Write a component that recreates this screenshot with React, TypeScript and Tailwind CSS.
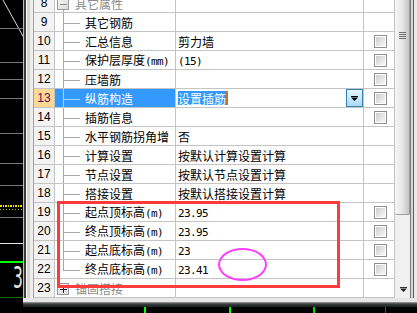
import React from "react";

type Row = {
  n: number;
  name: string;
  value?: string;
  cb?: boolean;
  sel?: boolean;
  group?: "minus" | "plus";
  last?: boolean;
};

const rows: Row[] = [
  { n: 8, name: "其它属性", group: "minus" },
  { n: 9, name: "其它钢筋" },
  { n: 10, name: "汇总信息", value: "剪力墙", cb: true },
  { n: 11, name: "保护层厚度(mm)", value: "(15)", cb: true },
  { n: 12, name: "压墙筋", cb: true },
  { n: 13, name: "纵筋构造", value: "设置插筋", cb: true, sel: true },
  { n: 14, name: "插筋信息", cb: true },
  { n: 15, name: "水平钢筋拐角增", value: "否" },
  { n: 16, name: "计算设置", value: "按默认计算设置计算" },
  { n: 17, name: "节点设置", value: "按默认节点设置计算" },
  { n: 18, name: "搭接设置", value: "按默认搭接设置计算" },
  { n: 19, name: "起点顶标高(m)", value: "23.95", cb: true },
  { n: 20, name: "终点顶标高(m)", value: "23.95", cb: true },
  { n: 21, name: "起点底标高(m)", value: "23", cb: true },
  { n: 22, name: "终点底标高(m)", value: "23.41", cb: true, last: true },
  { n: 23, name: "锚固搭接", group: "plus" },
];

// ascii runs drawn half-width like the bitmap song font
function Txt({ s }: { s: string }) {
  const parts = s.split(/([\x21-\x7e]+)/);
  return (
    <>
      {parts.map((p, i) =>
        i % 2 === 1 ? (
          <span key={i} className="font-['DejaVu_Sans_Mono',monospace] text-[11px] tracking-[-0.6px]">
            {p}
          </span>
        ) : (
          <span key={i}>{p}</span>
        )
      )}
    </>
  );
}

function Checkbox() {
  return (
    <div className="w-[13px] h-[13px] border border-[#8e8e8e] bg-white p-[1px] ml-[2px]">
      <div className="w-full h-full bg-linear-to-br from-[#cdcdcd] to-[#f8f8f8]" />
    </div>
  );
}

function ExpandBox({ plus }: { plus?: boolean }) {
  return (
    <div className="absolute left-[2px] top-[4px] w-[12px] h-[12px] border border-[#9a9a9a] bg-linear-to-br from-[#f4f4f4] to-[#dcdcdc] flex items-center justify-center">
      <div className={`relative w-[7px] h-px ${plus ? "bg-[#202020]" : "bg-[#8a8a8a]"}`}>
        {plus && <div className="absolute left-[3px] top-[-3px] w-px h-[7px] bg-[#202020]" />}
      </div>
    </div>
  );
}

function NameCell({ r }: { r: Row }) {
  const line = r.sel ? "bg-[#a8d2ff]" : "bg-[#a6a6a6]";
  return (
    <div
      className={`relative w-[121px] shrink-0 border-r border-[#c4c4c4] flex items-center overflow-hidden whitespace-nowrap ${
        r.sel ? "bg-[#3399ff] text-white" : r.group ? "text-[#8c8c8c]" : "text-black"
      } ${r.group ? "pl-[20px]" : "pl-[30px]"}`}
    >
      {r.group === "minus" && (
        <>
          <div className={`absolute left-[8px] top-[16px] bottom-0 w-px ${line}`} />
          <ExpandBox />
        </>
      )}
      {r.group === "plus" && <ExpandBox plus />}
      {!r.group && (
        <>
          <div className={`absolute left-[8px] top-0 w-px ${line} ${r.last ? "h-[11px]" : "bottom-0"}`} />
          <div className={`absolute left-[8px] top-[10px] w-[17px] h-px ${line}`} />
        </>
      )}
      <span className="pt-[1px]">
        <Txt s={r.name} />
      </span>
    </div>
  );
}

function ValueCell({ r }: { r: Row }) {
  return (
    <div className="relative w-[188px] shrink-0 border-r border-[#c4c4c4] flex items-center pl-[2px] whitespace-nowrap overflow-hidden">
      {r.sel ? (
        <>
          <span className="bg-[#3399ff] text-white leading-[13px] pt-[1px]">{r.value}</span>
          <span className="w-[2px] h-[14px] bg-[#cf6d2a]" />
          <div className="ml-auto h-full w-[17px] border border-[#3c7fb1] bg-linear-to-b from-[#e6f4fc] to-[#a9daf6] flex items-center justify-center">
            <svg width="7" height="5" viewBox="0 0 7 5">
              <rect x="0" y="0" width="7" height="1" fill="#000" />
              <path d="M0 1.5 H7 L3.5 5 Z" fill="#000" />
            </svg>
          </div>
        </>
      ) : (
        <span className="pt-[1px]">{r.value && <Txt s={r.value} />}</span>
      )}
    </div>
  );
}

function TableRow({ r }: { r: Row }) {
  return (
    <div className="flex h-[19px] border-b border-[#c4c4c4] text-[12px] leading-[17px]">
      <div
        className={`w-[21px] shrink-0 border-r border-[#c4c4c4] flex items-center justify-center font-['Liberation_Sans',sans-serif] text-[12px] ${
          r.sel ? "bg-[#ffd894] text-[#58105e]" : "bg-[#f3f3f3] text-black"
        }`}
      >
        {r.n}
      </div>
      <NameCell r={r} />
      <ValueCell r={r} />
      <div className="w-[31px] shrink-0 border-r border-[#c4c4c4] flex items-center justify-center">
        {r.cb && <Checkbox />}
      </div>
    </div>
  );
}

function CadLeft() {
  return (
    <svg width="23" height="313" viewBox="0 0 23 313" className="shrink-0 block">
      <rect width="23" height="313" fill="#000" />
      <line x1="3" y1="0" x2="24" y2="38" stroke="#d8d8d8" strokeWidth="1" />
      {[28.5, 62.5, 79.5, 98.5, 133.5, 163.5, 185.5, 217.5].map((y) => (
        <line key={y} x1="0" y1={y} x2="23" y2={y} stroke="#7a7a7a" strokeWidth="1" />
      ))}
      <line x1="0" y1="206" x2="23" y2="206" stroke="#f0e000" strokeWidth="2" strokeDasharray="2 1 1 1" />
      <line x1="0" y1="209.5" x2="23" y2="209.5" stroke="#c8b800" strokeWidth="1" strokeDasharray="1 2" />
      <line x1="0" y1="243.5" x2="23" y2="243.5" stroke="#e8e8e8" strokeWidth="1" />
      <line x1="0" y1="262" x2="23" y2="262" stroke="#00ff00" strokeWidth="2" />
      <line x1="0" y1="297.5" x2="23" y2="297.5" stroke="#0a6a0a" strokeWidth="1" />
      <text
        x="13"
        y="288"
        fill="#e4e4e4"
        fontSize="31"
        fontFamily="DejaVu Sans, sans-serif"
        transform="translate(13 0) scale(0.5 1) translate(-13 0)"
      >
        3
      </text>
    </svg>
  );
}

function Scrollbar() {
  return (
    <div className="flex h-full shrink-0 w-[22px]">
      <div className="w-[15px] flex flex-col bg-[#f0f0f0]">
        <div className="h-[215px] rounded-b-[2px] border-r border-b border-[#9c9c9c] bg-linear-to-r from-[#f6f6f6] via-[#e8e8e8] to-[#c4c4c4] pt-[32px] flex flex-col items-center gap-[1px]">
          {[0, 1, 2, 3].map((i) => (
            <div key={i} className="w-[7px] h-px bg-[#6e6e6e] ml-[1px]" />
          ))}
        </div>
        <div className="flex-1 flex flex-col items-center justify-end pb-[6px]">
          <svg width="7" height="5" viewBox="0 0 7 5" className="ml-[2px]">
            <rect x="0" y="0" width="7" height="1" fill="#333" />
            <path d="M0 1.5 H7 L3.5 5 Z" fill="#222" />
          </svg>
        </div>
      </div>
      <div className="w-px bg-[#7a7a7a]" />
      <div className="w-[2px] bg-[#d6d6d6]" />
      <div className="w-px bg-[#5e5e5e]" />
      <div className="w-[3px] bg-[#e9e9e9]" />
    </div>
  );
}

export default function App() {
  return (
    <div className="relative w-[417px] h-[313px] overflow-hidden bg-black flex font-['Noto_Sans_CJK_SC',sans-serif]">
      <CadLeft />
      <div className="flex flex-col w-[394px]">
        <div className="flex h-[298px]">
          {/* panel frame */}
          <div className="w-px bg-[#bdbdbd]" />
          <div className="w-[2px] bg-[#3a3a3a]" />
          <div className="w-px bg-white" />
          <div className="w-[3px] bg-[#d6d3ce]" />
          <div className="w-[3px] bg-[#efefef]" />
          <div className="w-[362px] border-l border-[#a0a0a0] bg-white overflow-hidden">
            <div className="mt-[-6px]">
              {rows.map((r) => (
                <TableRow key={r.n} r={r} />
              ))}
            </div>
          </div>
          <Scrollbar />
        </div>
        <div className="flex flex-col h-[15px]">
          <div className="h-[4px] bg-[#e6e6e6]" />
          <div className="h-px bg-[#8a8a8a]" />
          <div className="h-px bg-[#555]" />
          <div className="h-[3px] bg-linear-to-b from-[#3a4040] to-[#1a1e1e]" />
          <svg width="394" height="6" viewBox="0 0 394 6" className="block">
            <rect width="394" height="6" fill="#000" />
            <rect x="121" y="0" width="2" height="6" fill="#00ff00" />
            <rect x="206" y="0" width="2" height="6" fill="#00ff00" />
            <rect x="290" y="0" width="2" height="6" fill="#00e000" />
            <rect x="362" y="0" width="1" height="6" fill="#0a7a0a" />
          </svg>
        </div>
      </div>
      {/* annotations drawn over the grid */}
      <div className="absolute left-[57px] top-[201px] w-[283px] h-[87px] border-[3px] border-[#ff3a3a]" />
      <div className="absolute left-[218px] top-[248px] w-[49px] h-[33px] rounded-[50%] border-2 border-[#ff3cff]" />
    </div>
  );
}
